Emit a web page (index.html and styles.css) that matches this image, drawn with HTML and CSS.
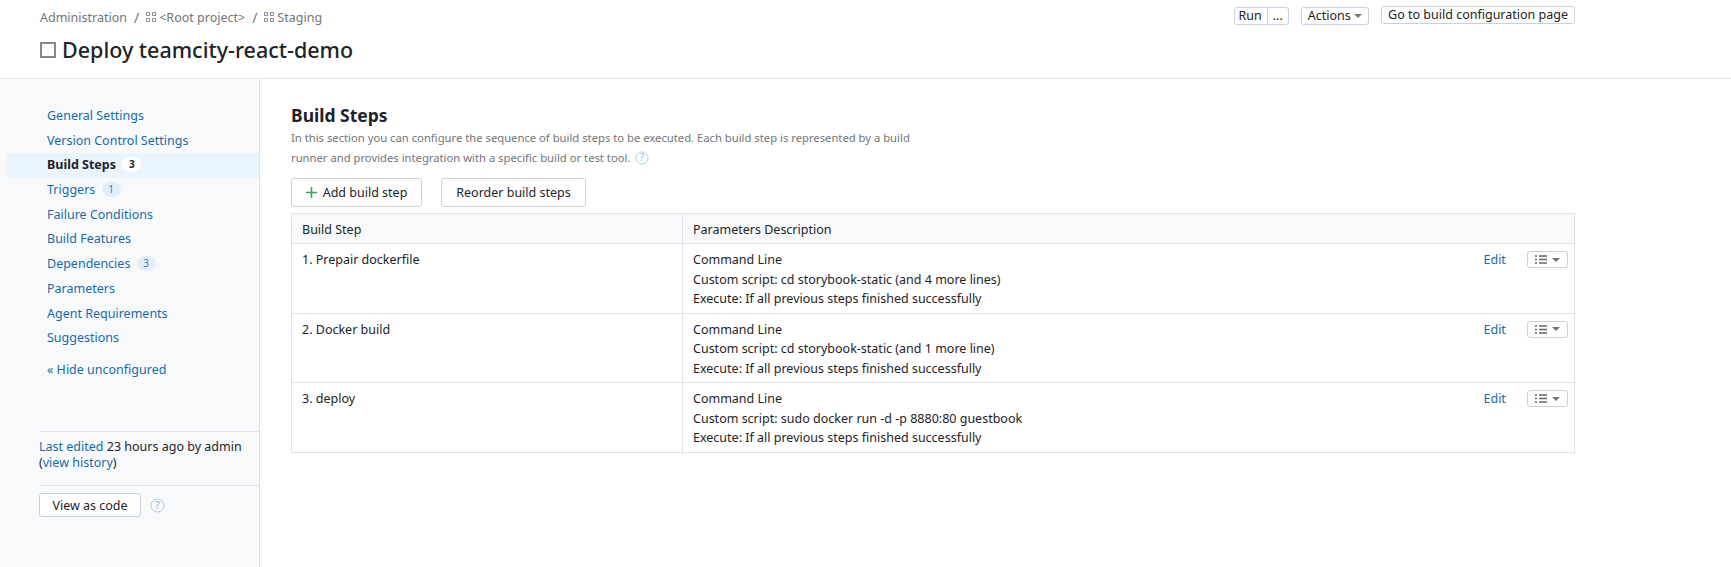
FILE: index.html
```html
<!DOCTYPE html>
<html lang="en">
<head>
  <meta charset="UTF-8" />
  <title>Deploy teamcity-react-demo</title>
  <link rel="stylesheet" href="styles.css">
</head>
<body>

<header class="top">
  <div class="top-left">
    <div class="crumbs">
      <span>Administration</span><span class="sep">/</span>
      <svg class="grid-icon" width="10" height="10" viewBox="0 0 10 10"><path d="M.5.5h3v3h-3zM6.5.5h3v3h-3zM.5 6.5h3v3h-3zM6.5 6.5h3v3h-3z"/></svg>
      <span>&lt;Root project&gt;</span><span class="sep">/</span>
      <svg class="grid-icon" width="10" height="10" viewBox="0 0 10 10"><path d="M.5.5h3v3h-3zM6.5.5h3v3h-3zM.5 6.5h3v3h-3zM6.5 6.5h3v3h-3z"/></svg>
      <span>Staging</span>
    </div>
    <h1><span class="box"></span>Deploy teamcity-react-demo</h1>
  </div>
  <div class="top-actions">
    <div class="btn-group"><span>Run</span><span class="more">...</span></div>
    <div class="small-btn actions">Actions <i class="caret"></i></div>
    <div class="small-btn goto">Go to build configuration page</div>
  </div>
</header>

<div class="page">
  <aside class="side">
    <nav class="menu">
      <a>General Settings</a>
      <a>Version Control Settings</a>
      <a class="active">Build Steps <b class="count">3</b></a>
      <a>Triggers <b class="count">1</b></a>
      <a>Failure Conditions</a>
      <a>Build Features</a>
      <a>Dependencies <b class="count">3</b></a>
      <a>Parameters</a>
      <a>Agent Requirements</a>
      <a>Suggestions</a>
      <a class="hide">« Hide unconfigured</a>
    </nav>
    <div class="edited"><a>Last edited</a> 23 hours ago by admin<br>(<a>view history</a>)</div>
    <div class="code-row">
      <div class="btn code-btn">View as code</div>
      <svg class="help" width="15" height="15" viewBox="0 0 15 15"><circle cx="7.5" cy="7.5" r="6.5"/><text x="7.5" y="11" text-anchor="middle">?</text></svg>
    </div>
  </aside>

  <main class="content">
    <h2>Build Steps</h2>
    <p class="desc">In this section you can configure the sequence of build steps to be executed. Each build step is represented by a build runner and provides integration with a specific build or test tool.
      <svg class="help" width="14" height="14" viewBox="0 0 15 15"><circle cx="7.5" cy="7.5" r="6.5"/><text x="7.5" y="11" text-anchor="middle">?</text></svg></p>
    <div class="buttons">
      <div class="btn add-btn"><svg width="11" height="11" viewBox="0 0 11 11"><path d="M5.5 0v11M0 5.5h11" stroke="#3aa757" stroke-width="1.6"/></svg>Add build step</div>
      <div class="btn reorder-btn">Reorder build steps</div>
    </div>

    <table class="steps">
      <colgroup>
        <col class="col-name"><col><col class="col-edit"><col class="col-menu">
      </colgroup>
      <thead>
        <tr><th>Build Step</th><th colspan="3">Parameters Description</th></tr>
      </thead>
      <tbody>
        <tr>
          <td>1. Prepair dockerfile</td>
          <td class="params">Command Line<br>Custom script: cd storybook-static (and 4 more lines)<br>Execute: If all previous steps finished successfully</td>
          <td class="edit"><a>Edit</a></td>
          <td class="menu-cell"><div class="row-menu"><svg width="12" height="9" viewBox="0 0 12 9"><path d="M0 1h2M4 1h8M0 4.5h2M4 4.5h8M0 8h2M4 8h8" stroke="#666" stroke-width="1.3"/></svg><i class="caret"></i></div></td>
        </tr>
        <tr>
          <td>2. Docker build</td>
          <td class="params">Command Line<br>Custom script: cd storybook-static (and 1 more line)<br>Execute: If all previous steps finished successfully</td>
          <td class="edit"><a>Edit</a></td>
          <td class="menu-cell"><div class="row-menu"><svg width="12" height="9" viewBox="0 0 12 9"><path d="M0 1h2M4 1h8M0 4.5h2M4 4.5h8M0 8h2M4 8h8" stroke="#666" stroke-width="1.3"/></svg><i class="caret"></i></div></td>
        </tr>
        <tr>
          <td>3. deploy</td>
          <td class="params">Command Line<br>Custom script: sudo docker run -d -p 8880:80 guestbook<br>Execute: If all previous steps finished successfully</td>
          <td class="edit"><a>Edit</a></td>
          <td class="menu-cell"><div class="row-menu"><svg width="12" height="9" viewBox="0 0 12 9"><path d="M0 1h2M4 1h8M0 4.5h2M4 4.5h8M0 8h2M4 8h8" stroke="#666" stroke-width="1.3"/></svg><i class="caret"></i></div></td>
        </tr>
      </tbody>
    </table>
  </main>
</div>

</body>
</html>
```

FILE: styles.css
```css
/* General */
body {
  font-family: "Noto Sans", sans-serif;
  font-size: 12.5px;
  color: #1f2328;
  background-color: #fff;
  margin: 0;
  height: 567px;
  overflow: hidden;
}

a {
  color: #1a6aa8;
}

/* Header */
.top {
  height: 79px;
  box-sizing: border-box;
  padding: 6px 156px 0 40px;
  border-bottom: 1px solid #dfe3e9;
  display: flex;
  justify-content: space-between;
  align-items: flex-start;
}

.crumbs {
  display: flex;
  align-items: center;
  gap: 3px;
  height: 22px;
  color: #737577;
}

.crumbs .sep {
  margin: 0 4px;
  font-size: 14px;
}

.grid-icon {
  fill: none;
  stroke: #8a8c8e;
}

h1 {
  font-size: 21.5px;
  font-weight: 500;
  margin: 9px 0 0;
  display: flex;
  align-items: center;
  line-height: 26px;
}

.box {
  width: 12px;
  height: 12px;
  border: 2px solid #888;
  margin-right: 6px;
}

.top-actions {
  display: flex;
  gap: 12px;
  align-items: flex-start;
  line-height: 16px;
}

.btn-group {
  display: flex;
  margin-top: 1px;
  border: 1px solid #c6d3de;
  border-radius: 3px;
}

.btn-group span {
  padding: 0 5px 0 4px;
}

.btn-group .more {
  border-left: 1px solid #c6d3de;
  padding: 0 5px;
}

.small-btn {
  border: 1px solid #c6d3de;
  border-radius: 3px;
  padding: 0 6px;
}

.actions {
  margin-top: 1px;
}

.caret {
  display: inline-block;
  width: 0;
  height: 0;
  border: 4px solid transparent;
  border-top: 4px solid #777;
  border-bottom: 0;
  vertical-align: 2px;
}

/* Layout */
.page {
  display: flex;
  height: 488px;
}

/* Sidebar */
.side {
  width: 260px;
  box-sizing: border-box;
  background-color: #f7f9fb;
  border-right: 1px solid #dfe3e9;
  padding-top: 25px;
}

.menu {
  margin-left: 7px;
  height: 327px;
}

.menu a {
  display: block;
  height: 24.7px;
  line-height: 24.7px;
  padding-left: 40px;
}

.menu .active {
  background-color: #e9f4fc;
  color: #1f2328;
  font-weight: 700;
}

.menu .hide {
  margin-top: 7px;
}

.count {
  display: inline-block;
  min-width: 19px;
  height: 15px;
  line-height: 15px;
  margin-left: 3px;
  border-radius: 8px;
  background-color: #e3edf8;
  color: #3f78c9;
  font-size: 10px;
  font-weight: 400;
  text-align: center;
  vertical-align: 1px;
}

.active .count {
  background-color: #fff;
  color: #1f2328;
  font-weight: 700;
}

.edited {
  margin-left: 39px;
  padding: 7px 0 14px;
  line-height: 16px;
  border-top: 1px solid #dfe3e9;
  border-bottom: 1px solid #dfe3e9;
}

.code-row {
  display: flex;
  align-items: center;
  margin: 7px 0 0 39px;
  gap: 9px;
}

.btn {
  background-color: #fff;
  border: 1px solid #c6d3de;
  border-radius: 3px;
  box-sizing: border-box;
  display: flex;
  align-items: center;
  justify-content: center;
}

.code-btn {
  width: 102px;
  height: 24px;
}

.help {
  fill: none;
  stroke: #a9cbe6;
}

.help text {
  fill: #8fb6d8;
  stroke: none;
  font-size: 11px;
}

/* Main */
.content {
  padding: 25px 0 0 31px;
  width: 1284px;
}

h2 {
  font-size: 17.5px;
  font-weight: 700;
  margin: 0;
  line-height: 22px;
}

.desc {
  width: 640px;
  margin: 2px 0 0;
  font-size: 11.25px;
  line-height: 20px;
  color: #737577;
}

.desc .help {
  vertical-align: -3px;
  margin-left: 2px;
}

.buttons {
  display: flex;
  gap: 19px;
  margin: 10px 0 6px;
}

.add-btn {
  width: 131px;
  height: 29px;
  gap: 6px;
}

.reorder-btn {
  width: 145px;
  height: 29px;
}

/* Steps table */
.steps {
  width: 1284px;
  border-collapse: collapse;
  table-layout: fixed;
}

.col-name {
  width: 391px;
}

.col-edit {
  width: 43px;
}

.col-menu {
  width: 48px;
}

.steps th,
.steps td {
  border: 1px solid #dfe3e9;
  padding: 6px 10px 4px;
  text-align: left;
  vertical-align: top;
  font-weight: 400;
  line-height: 19.5px;
}

.steps th {
  background-color: #f7f9fb;
  height: 20px;
  padding: 6px 10px 3px;
}

.steps td.params {
  border-right: 0;
}

.steps td.edit {
  border-left: 0;
  border-right: 0;
  padding: 6px 0 0;
}

.steps td.menu-cell {
  border-left: 0;
  padding: 7px 7px 0 0;
}

.row-menu {
  width: 41px;
  height: 17px;
  box-sizing: border-box;
  border: 1px solid #c6d3de;
  border-radius: 3px;
  display: flex;
  align-items: center;
  justify-content: center;
  gap: 5px;
}
```
